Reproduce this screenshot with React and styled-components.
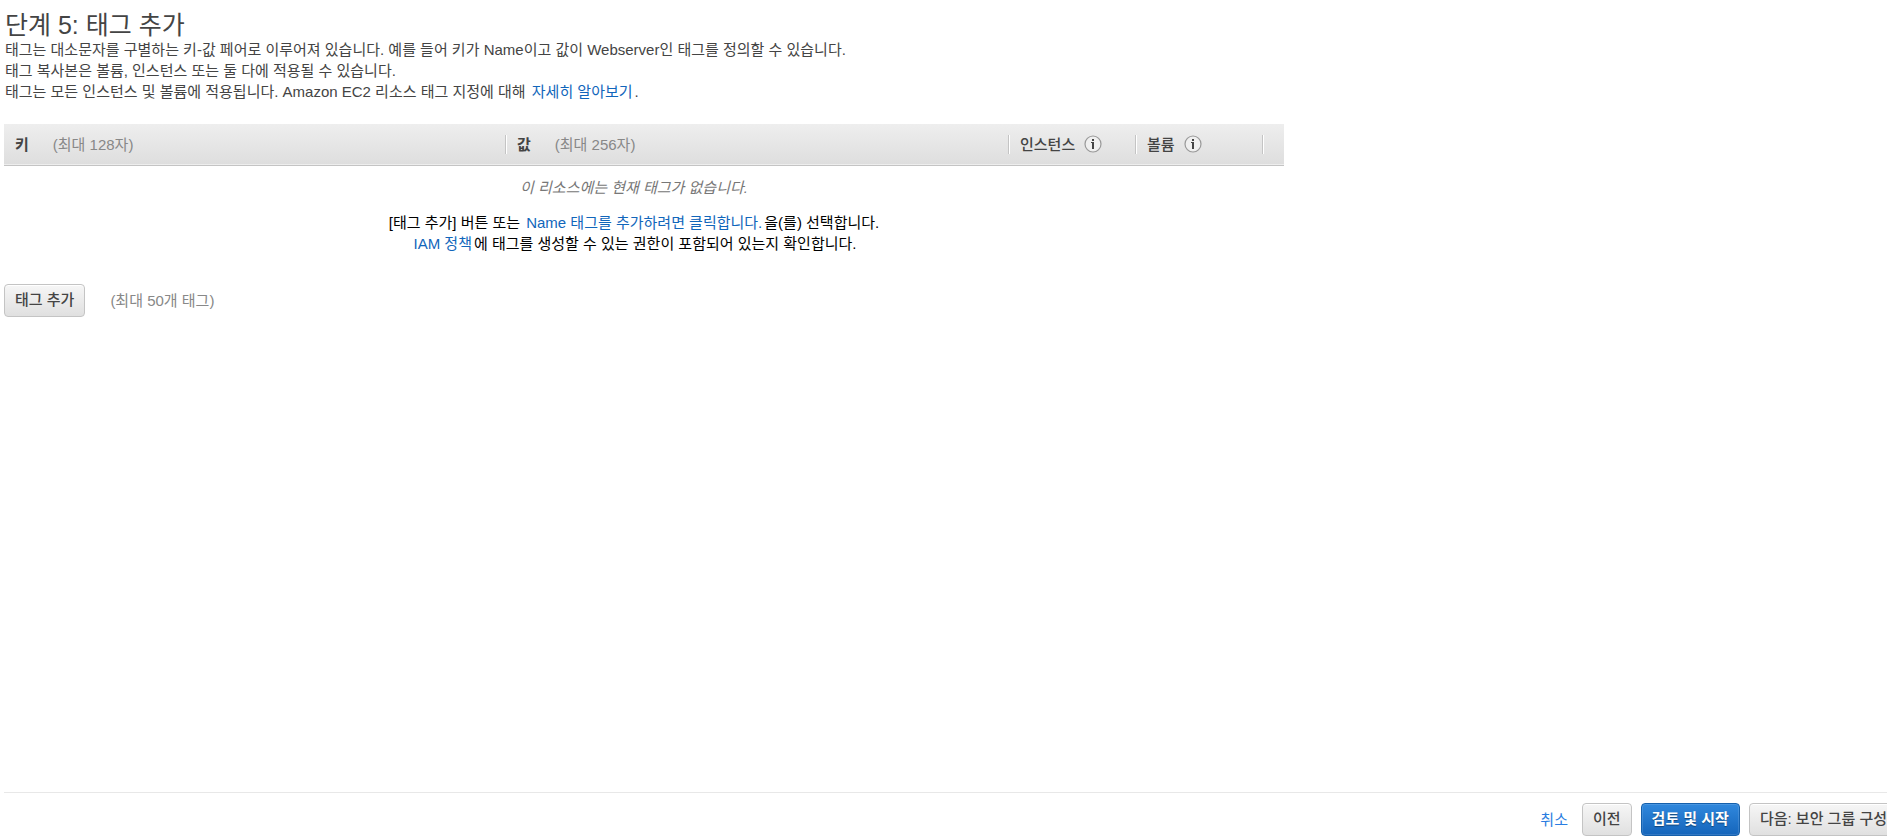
import React from 'react'
import styled, { createGlobalStyle, css } from 'styled-components';

const GlobalStyle = createGlobalStyle`
  body {
    margin: 0;
    background-color: white;
    color: #444;
    font-family: "Liberation Sans", "Noto Sans CJK KR", sans-serif;
    font-size: 15px;
    line-height: 21px;
    overflow: hidden;
  }
`;

const Page = styled.div`
  min-height: 100vh;
  box-sizing: border-box;
  padding: 11px 0 4px 4px;
  display: flex;
  flex-direction: column;
`;

const Main = styled.main`
  flex: 1;
`;

const Intro = styled.header`
  padding: 0 0 22px 1px;
`;

const Title = styled.h1`
  margin: 0;
  font-size: 25px;
  line-height: 28px;
  font-weight: 400;
`;

const Description = styled.p`
  margin: 0;
`;

const Link = styled.a`
  color: #1166bb;
  text-decoration: none;
  margin: 0 2px;
`;

const Table = styled.table`
  width: 100%;
  max-width: 1280px;
  border-collapse: collapse;
  table-layout: fixed;
`;

const HeadRow = styled.tr`
  height: 41px;
  box-sizing: border-box;
  background: linear-gradient(#eeeeee, #dedede);
  border-bottom: 1px solid #c4c4c4;
`;

const HeadCell = styled.th`
  width: ${(props) => props.$width};
  padding: 0;
  text-align: left;
  font-weight: 500;
`;

const HeadContent = styled.div`
  height: 19px;
  padding-left: 11px;
  display: flex;
  align-items: center;
  gap: ${(props) => props.$gap};
  line-height: 19px;
  ${(props) => props.$divider && css`
    border-left: 1px solid #c4c4c4;
    box-shadow: inset 1px 0 0 white;
  `}
`;

const Name = styled.span`
  font-weight: ${(props) => (props.$bold ? 700 : 500)};
`;

const Limit = styled.span`
  color: #888;
  font-weight: 400;
`;

const InfoIcon = styled.svg`
  width: 18px;
  height: 18px;
  display: block;
`;

const EmptyCell = styled.td`
  padding: 11px 20px 0 0;
  text-align: center;
  color: black;
`;

const EmptyTitle = styled.p`
  margin: 0 0 14px;
  color: #777;
  font-style: italic;
`;

const EmptyText = styled.p`
  margin: 0;
`;

const AddRow = styled.div`
  margin-top: 30px;
  display: flex;
  align-items: center;
  gap: 25px;
`;

const Button = styled.button`
  height: 33px;
  padding: 0 10px 2px;
  border: 1px solid #c4c4c4;
  border-radius: 4px;
  background: linear-gradient(#f6f6f6, #e0e0e0);
  box-shadow: inset 0 1px 0 white;
  color: #444;
  font: inherit;
  font-weight: 500;
  white-space: nowrap;
  cursor: pointer;
  ${(props) => props.$primary && css`
    border-color: #1560ac;
    background: linear-gradient(#3088dd, #1565bb);
    box-shadow: inset 0 0 0 1px rgba(255, 255, 255, 0.12);
    color: white;
    font-weight: 700;
    text-shadow: 0 1px 1px rgba(0, 0, 0, 0.4);
  `}
`;

const Footer = styled.footer`
  padding-top: 10px;
  border-top: 1px solid #e8e8e8;
  display: flex;
  align-items: center;
  justify-content: flex-end;
`;

// the row is wider than the page, its last button runs off the right edge
const Actions = styled.div`
  margin-right: -11px;
  display: flex;
  align-items: center;
  gap: 9px;
`;

const CancelLink = styled(Link)`
  color: #2a7de1;
  margin: 0 5px 0 0;
`;

const Info = () => (
    <InfoIcon viewBox="0 0 18 18" role="img" aria-label="info">
        <circle cx="9" cy="9" r="8" fill="#efefef" stroke="#999" strokeWidth="1.2" />
        <path d="M7 7h3v7H8V8H7z" fill="#444" />
        <rect x="8" y="4" width="2" height="2" fill="#444" />
    </InfoIcon>
)

export default function App() {
    return (
        <Page>
            <GlobalStyle />
            <Main>
                <Intro>
                    <Title>단계 5: 태그 추가</Title>
                    <Description>
                        태그는 대소문자를 구별하는 키-값 페어로 이루어져 있습니다. 예를 들어 키가 Name이고 값이 Webserver인 태그를 정의할 수 있습니다.<br />
                        태그 복사본은 볼륨, 인스턴스 또는 둘 다에 적용될 수 있습니다.<br />
                        태그는 모든 인스턴스 및 볼륨에 적용됩니다. Amazon EC2 리소스 태그 지정에 대해 <Link href="#learn">자세히 알아보기</Link>.
                    </Description>
                </Intro>
                <Table>
                    <thead>
                        <HeadRow>
                            <HeadCell $width="501px">
                                <HeadContent $gap="24px"><Name $bold>키</Name><Limit>(최대 128자)</Limit></HeadContent>
                            </HeadCell>
                            <HeadCell $width="503px">
                                <HeadContent $gap="24px" $divider><Name $bold>값</Name><Limit>(최대 256자)</Limit></HeadContent>
                            </HeadCell>
                            <HeadCell $width="127px">
                                <HeadContent $gap="9px" $divider><Name>인스턴스</Name><Info /></HeadContent>
                            </HeadCell>
                            <HeadCell $width="127px">
                                <HeadContent $gap="9px" $divider><Name>볼륨</Name><Info /></HeadContent>
                            </HeadCell>
                            <HeadCell as="td">
                                <HeadContent $divider />
                            </HeadCell>
                        </HeadRow>
                    </thead>
                    <tbody>
                        <tr>
                            <EmptyCell colSpan={5}>
                                <EmptyTitle>이 리소스에는 현재 태그가 없습니다.</EmptyTitle>
                                <EmptyText>[태그 추가] 버튼 또는 <Link href="#name">Name 태그를 추가하려면 클릭합니다.</Link>을(를) 선택합니다.</EmptyText>
                                <EmptyText><Link href="#iam">IAM 정책</Link>에 태그를 생성할 수 있는 권한이 포함되어 있는지 확인합니다.</EmptyText>
                            </EmptyCell>
                        </tr>
                    </tbody>
                </Table>
                <AddRow>
                    <Button type="button">태그 추가</Button>
                    <Limit>(최대 50개 태그)</Limit>
                </AddRow>
            </Main>
            <Footer>
                <Actions>
                    <CancelLink href="#cancel">취소</CancelLink>
                    <Button type="button">이전</Button>
                    <Button type="button" $primary>검토 및 시작</Button>
                    <Button type="button">다음: 보안 그룹 구성</Button>
                </Actions>
            </Footer>
        </Page>
    )
}
